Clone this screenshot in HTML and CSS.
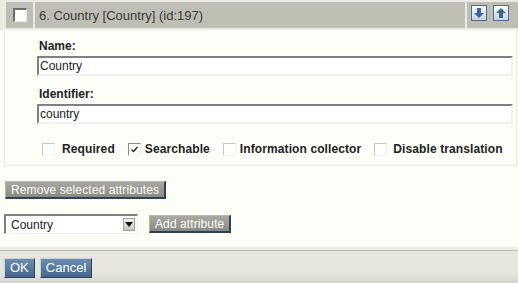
FILE: index.html
```html
<!DOCTYPE html>
<html lang="en">
<head>
    <meta charset="UTF-8">
    <title>Class attributes</title>
    <link rel="stylesheet" href="styles.css">
</head>
<body>
    <div class="attr">
        <div class="attr-head">
            <div class="cell cell-check"><span class="box box-dark"></span></div>
            <div class="cell cell-title">6. Country [Country] (id:197)</div>
            <div class="cell cell-move">
                <span class="arrow-btn">
                    <svg width="16" height="16" viewBox="0 0 16 16"><path d="M6 3h4v5h3l-5 5-5-5h3z" fill="#3d6790"/></svg>
                </span>
                <span class="arrow-btn">
                    <svg width="16" height="16" viewBox="0 0 16 16"><path d="M6 13h4V8h3L8 3 3 8h3z" fill="#3d6790"/></svg>
                </span>
            </div>
        </div>
        <div class="attr-body">
            <label class="field-label">Name:</label>
            <div class="text-input">Country</div>
            <label class="field-label">Identifier:</label>
            <div class="text-input">country</div>
            <div class="flags">
                <span class="flag"><span class="box"></span><span class="flag-text wide">Required</span></span>
                <span class="flag"><span class="box box-checked">
                    <svg width="9" height="9" viewBox="0 0 9 9"><path d="M1.5 4.5l2 2 4-4.5" fill="none" stroke="#222" stroke-width="1.3"/></svg>
                </span><span class="flag-text">Searchable</span></span>
                <span class="flag"><span class="box"></span><span class="flag-text">Information collector</span></span>
                <span class="flag"><span class="box"></span><span class="flag-text mid">Disable translation</span></span>
            </div>
        </div>
    </div>

    <div class="actions">
        <button type="button" class="btn btn-gray">Remove selected attributes</button>
    </div>

    <div class="add-row">
        <div class="select">
            <span class="select-value">Country</span>
            <span class="select-arrow">
                <svg width="8" height="5" viewBox="0 0 8 5"><path d="M0 0h8L4 5z" fill="#111"/></svg>
            </span>
        </div>
        <button type="button" class="btn btn-gray">Add attribute</button>
    </div>

    <div class="bottom-bar">
        <button type="button" class="btn btn-blue">OK</button>
        <button type="button" class="btn btn-blue">Cancel</button>
    </div>
</body>
</html>
```

FILE: styles.css
```css
body {
    margin: 0;
    background-color: #fdfef8;
    font-family: "Liberation Sans", Arial, sans-serif;
    font-size: 12px;
    color: #222;
}
.attr-head {
    display: flex;
    gap: 2px;
    background-color: #ebebe4;
    padding: 2px 0 2px 6px;
}
.cell {
    height: 26px;
    background-color: #bfbeb5;
    display: flex;
    align-items: center;
}
.cell-check {
    width: 27px;
    justify-content: center;
}
.cell-title {
    flex: 1;
    padding-left: 4px;
    font-size: 13px;
    color: #3a3a3a;
}
.cell-move {
    width: 47px;
    gap: 6px;
    padding-left: 4px;
    align-items: flex-start;
}
.arrow-btn {
    width: 14px;
    height: 14px;
    margin-top: 3px;
    border: 1px solid #4b6f94;
    background: linear-gradient(#fafbfd, #c9d3df);
    display: flex;
}
.arrow-btn svg {
    margin: -1px;
}
.box {
    display: inline-block;
    box-sizing: border-box;
    width: 13px;
    height: 13px;
    background-color: #fff;
    border-top: 1px solid #c4c4c4;
    border-left: 1px solid #c4c4c4;
    border-right: 1px solid #f2f2f2;
    border-bottom: 1px solid #f2f2f2;
}
.box-dark {
    width: 14px;
    height: 14px;
    border-top: 2px solid #6e6e6e;
    border-left: 2px solid #6e6e6e;
    border-right: 1px solid #e6e6e6;
    border-bottom: 1px solid #e6e6e6;
}
.box-checked {
    border-top-color: #8c8c8c;
    border-left-color: #8c8c8c;
    display: inline-flex;
    align-items: center;
    justify-content: center;
}
.attr-body {
    margin: 0 1px 0 4px;
    border: 1px solid #e9e9e2;
    border-top: none;
    padding: 9px 3px 0 32px;
    height: 126px;
}
.field-label {
    display: block;
    font-weight: bold;
    margin: 0 0 3px 2px;
    line-height: 14px;
}
.text-input {
    box-sizing: border-box;
    height: 20px;
    background-color: #fff;
    border-top: 2px solid #808080;
    border-left: 2px solid #808080;
    border-right: 2px solid #f1f1f1;
    border-bottom: 2px solid #f1f1f1;
    padding-left: 1px;
    line-height: 16px;
    margin-bottom: 11px;
}
.flags {
    display: flex;
    align-items: center;
    gap: 13px;
    padding-left: 5px;
    margin-top: 18px;
}
.flag {
    display: flex;
    align-items: center;
    gap: 4px;
}
.flag-text {
    font-weight: bold;
    font-size: 12px;
    letter-spacing: 0.1px;
}
.flag-text.wide {
    margin-left: 3px;
}
.flag-text.mid {
    margin-left: 2px;
}
.btn {
    font-family: "Liberation Sans", Arial, sans-serif;
    font-size: 12px;
    color: #fff;
    letter-spacing: 0.1px;
    padding: 0 5px;
    height: 18px;
    line-height: 14px;
    cursor: pointer;
}
.btn-gray {
    background: linear-gradient(#a9a9a1, #8a8a83);
    border-top: 1px solid #b8b8b0;
    border-left: 1px solid #b8b8b0;
    border-right: 2px solid #2d4257;
    border-bottom: 2px solid #2d4257;
}
.actions {
    display: flex;
    padding: 15px 0 0 5px;
}
.add-row {
    display: flex;
    align-items: center;
    gap: 11px;
    padding: 15px 0 0 4px;
}
.select {
    box-sizing: border-box;
    width: 134px;
    height: 20px;
    background-color: #fff;
    border-top: 2px solid #808080;
    border-left: 2px solid #808080;
    border-right: 1px solid #f1f1f1;
    border-bottom: 1px solid #f1f1f1;
    display: flex;
    align-items: center;
    justify-content: space-between;
    padding: 0 2px 0 5px;
}
.select-arrow {
    width: 12px;
    height: 13px;
    background: linear-gradient(#f2f2ee, #c8c8c2);
    border: 1px solid #a0a0a0;
    box-sizing: border-box;
    display: flex;
    align-items: center;
    justify-content: center;
}
.bottom-bar {
    margin-top: 13px;
    border-top: 3px solid #ecece5;
    box-shadow: inset 0 1px 0 #bcb9b0;
    padding: 8px 0 5px 4px;
    background: linear-gradient(#e6e6de 70%, #d4d4cc);
    display: flex;
    gap: 5px;
    height: 20px;
}
.btn-blue {
    height: 20px;
    background: linear-gradient(#6b8db0, #46688d);
    border-top: 1px solid #c7d2de;
    border-left: 1px solid #c7d2de;
    border-right: 1px solid #2d4257;
    border-bottom: 1px solid #2d4257;
    padding: 0 5px;
    font-size: 13px;
    letter-spacing: 0;
}
```
